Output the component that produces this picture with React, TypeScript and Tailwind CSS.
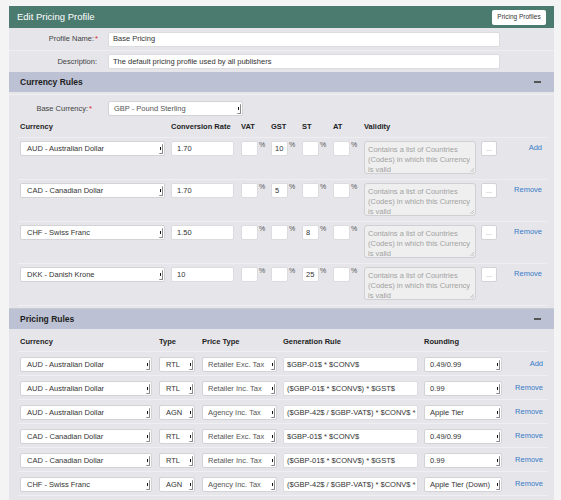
import React from "react";

const Arrow = () => (
  <div className="absolute right-[1px] top-[2px] h-[10px] w-[4px] border-r border-b border-[#8a8a8a] rounded-[1px] flex items-center justify-center">
    <div className="w-[1.5px] h-[3px] bg-[#111]" />
  </div>
);

const Sel = ({ className, text, tc = "text-[#333]", pl = "pl-[5px]" }: { className: string; text: string; tc?: string; pl?: string }) => (
  <div className={`relative h-[15px] bg-white border border-[#d2d2d7] rounded-[2px] flex items-center ${pl} ${tc} whitespace-nowrap overflow-hidden ${className}`}>
    <span>{text}</span>
    <Arrow />
  </div>
);

const Inp = ({ className, text, pl = "pl-[4px]" }: { className: string; text: string; pl?: string }) => (
  <div className={`h-[15px] bg-white border border-[#dcdce0] rounded-[2px] flex items-center ${pl} text-[#333] whitespace-nowrap overflow-hidden ${className}`}>
    {text}
  </div>
);

const Pct = ({ v }: { v: string }) => (
  <div className="flex items-start">
    <Inp className="w-[17px]" text={v} pl="pl-[3px]" />
    <span className="ml-[1px] text-[7px] leading-none text-[#555]">%</span>
  </div>
);

const currencyRows = [
  { c: "AUD - Australian Dollar", r: "1.70", vat: "", gst: "10", st: "", at: "", link: "Add" },
  { c: "CAD - Canadian Dollar", r: "1.70", vat: "", gst: "5", st: "", at: "", link: "Remove" },
  { c: "CHF - Swiss Franc", r: "1.50", vat: "", gst: "", st: "8", at: "", link: "Remove" },
  { c: "DKK - Danish Krone", r: "10", vat: "", gst: "", st: "25", at: "", link: "Remove" },
];

const pricingRows = [
  { c: "AUD - Australian Dollar", t: "RTL", p: "Retailer Exc. Tax", g: "$GBP-01$ * $CONV$", r: "0.49/0.99", link: "Add" },
  { c: "AUD - Australian Dollar", t: "RTL", p: "Retailer Inc. Tax", g: "($GBP-01$ * $CONV$) * $GST$", r: "0.99", link: "Remove" },
  { c: "AUD - Australian Dollar", t: "AGN", p: "Agency Inc. Tax", g: "($GBP-42$ / $GBP-VAT$) * $CONV$ *", r: "Apple Tier", link: "Remove" },
  { c: "CAD - Canadian Dollar", t: "RTL", p: "Retailer Exc. Tax", g: "$GBP-01$ * $CONV$", r: "0.49/0.99", link: "Remove" },
  { c: "CAD - Canadian Dollar", t: "RTL", p: "Retailer Inc. Tax", g: "($GBP-01$ * $CONV$) * $GST$", r: "0.99", link: "Remove" },
  { c: "CHF - Swiss Franc", t: "AGN", p: "Agency Inc. Tax", g: "($GBP-42$ / $GBP-VAT$) * $CONV$ *", r: "Apple Tier (Down)", link: "Remove" },
];

const Req = () => <span className="text-[#e02020] ml-[1px]">*</span>;

const SectionHead = ({ title }: { title: string }) => (
  <div className="h-[20px] bg-[#bcc1d3] flex items-center justify-between pl-[11px] pr-[13px]">
    <span className="font-bold text-[8.5px] text-[#1e1e1e]">{title}</span>
    <div className="w-[7px] h-[1.5px] bg-[#555]" />
  </div>
);

export default function App() {
  return (
    <div className="min-h-[500px] bg-[#f4f4f4] pt-[6px] font-['Liberation_Sans',Arial,sans-serif] text-[7.5px] text-[#333]">
      <div className="ml-[9px] w-[545px]">
        {/* Header */}
        <div className="h-[22px] bg-[#4b7a6f] flex items-center justify-between pl-[8px] pr-[8px]">
          <span className="text-white text-[9.5px]">Edit Pricing Profile</span>
          <div className="h-[15px] w-[54px] bg-white rounded-[2px] flex items-center justify-center text-[6.5px] text-[#333]">
            Pricing Profiles
          </div>
        </div>

        {/* Profile rows */}
        <div className="bg-[#e5e5ea]">
          <div className="h-[22px] flex items-center">
            <div className="w-[89px] text-right text-[#444]">
              Profile Name:<Req />
            </div>
            <Inp className="ml-[10px] w-[392px]" text="Base Pricing" />
          </div>
          <div className="h-[22px] flex items-center border-t border-[#efeff2]">
            <div className="w-[89px] text-right text-[#444] pr-[1px]">Description:</div>
            <Inp className="ml-[10px] w-[392px]" text="The default pricing profile used by all publishers" />
          </div>
        </div>

        <SectionHead title="Currency Rules" />

        {/* Currency body */}
        <div className="bg-[#e5e5ea] pt-[2px] pb-[2px]">
          <div className="border-t border-[#efeff2] pt-[6px]">
            <div className="h-[15px] flex items-center">
              <div className="w-[83px] text-right text-[#444]">
                Base Currency:<Req />
              </div>
              <Sel className="ml-[16px] w-[135px]" text="GBP - Pound Sterling" tc="text-[#555]" />
            </div>
          </div>
          <div className="ml-[9px] mr-[7px]">
            <div className="h-[22px] pl-[2px] grid grid-cols-[151px_70px_30px_31px_31px_31px_117px_16px_1fr] items-center font-bold text-[#222] border-b border-[#efeff2]">
              <span>Currency</span>
              <span>Conversion Rate</span>
              <span>VAT</span>
              <span>GST</span>
              <span>ST</span>
              <span>AT</span>
              <span>Validity</span>
              <span />
              <span />
            </div>
            {currencyRows.map((r, i) => (
              <div
                key={i}
                className="h-[42px] pt-[3px] pl-[2px] grid grid-cols-[151px_70px_30px_31px_31px_31px_117px_16px_1fr] items-start border-b border-[#efeff2]"
              >
                <Sel className="w-[145px]" text={r.c} pl="pl-[6px]" />
                <Inp className="w-[63px]" text={r.r} pl="pl-[5px]" />
                <Pct v={r.vat} />
                <Pct v={r.gst} />
                <Pct v={r.st} />
                <Pct v={r.at} />
                <div className="relative w-[112px] h-[33px] bg-[#efefef] border border-[#d0d0d4] rounded-[3px] pl-[3px] pt-[3px] text-[#a2a2a2] leading-[10px] overflow-hidden whitespace-nowrap">
                  <div>Contains a list of Countries</div>
                  <div>(Codes) in which this Currency</div>
                  <div>is valid</div>
                  <svg className="absolute right-[1px] bottom-[1px]" width="5" height="5" viewBox="0 0 5 5">
                    <path d="M1 5 L5 1 M3 5 L5 3" stroke="#b5b5b5" strokeWidth="0.7" />
                  </svg>
                </div>
                <div className="w-[16px] h-[15px] bg-white border border-[#d2d2d7] rounded-[2px] flex items-center justify-center text-[7px] text-[#999] leading-none">
                  ...
                </div>
                <div className="text-right pr-[5px] pt-[1px] text-[#3a7bc8]">{r.link}</div>
              </div>
            ))}
          </div>
        </div>

        <div className="border-t border-[#c9cbd6]">
          <SectionHead title="Pricing Rules" />
        </div>

        {/* Pricing body */}
        <div className="bg-[#e5e5ea] pb-[10px]">
          <div className="ml-[9px] mr-[6px]">
            <div className="h-[23px] pt-[4px] pl-[2px] grid grid-cols-[139px_43px_81px_141px_1fr] items-center font-bold text-[#222] border-b border-[#efeff2]">
              <span>Currency</span>
              <span>Type</span>
              <span>Price Type</span>
              <span>Generation Rule</span>
              <span>Rounding</span>
            </div>
            {pricingRows.map((r, i) => (
              <div
                key={i}
                className="h-[24px] pt-[5px] pl-[2px] grid grid-cols-[139px_43px_81px_141px_78px_1fr] items-start border-b border-[#efeff2]"
              >
                <Sel className="w-[132px]" text={r.c} pl="pl-[6px]" />
                <Sel className="w-[36px]" text={r.t} pl="pl-[6px]" />
                <Sel className="w-[75px]" text={r.p} pl="pl-[5px]" tc="text-[#555]" />
                <Inp className="w-[135px]" text={r.g} pl="pl-[3px]" />
                <Sel className="w-[78px]" text={r.r} pl="pl-[5px]" />
                <div className="text-right pr-[5px] pt-[1px] text-[#3a7bc8]">{r.link}</div>
              </div>
            ))}
          </div>
        </div>
      </div>
    </div>
  );
}
